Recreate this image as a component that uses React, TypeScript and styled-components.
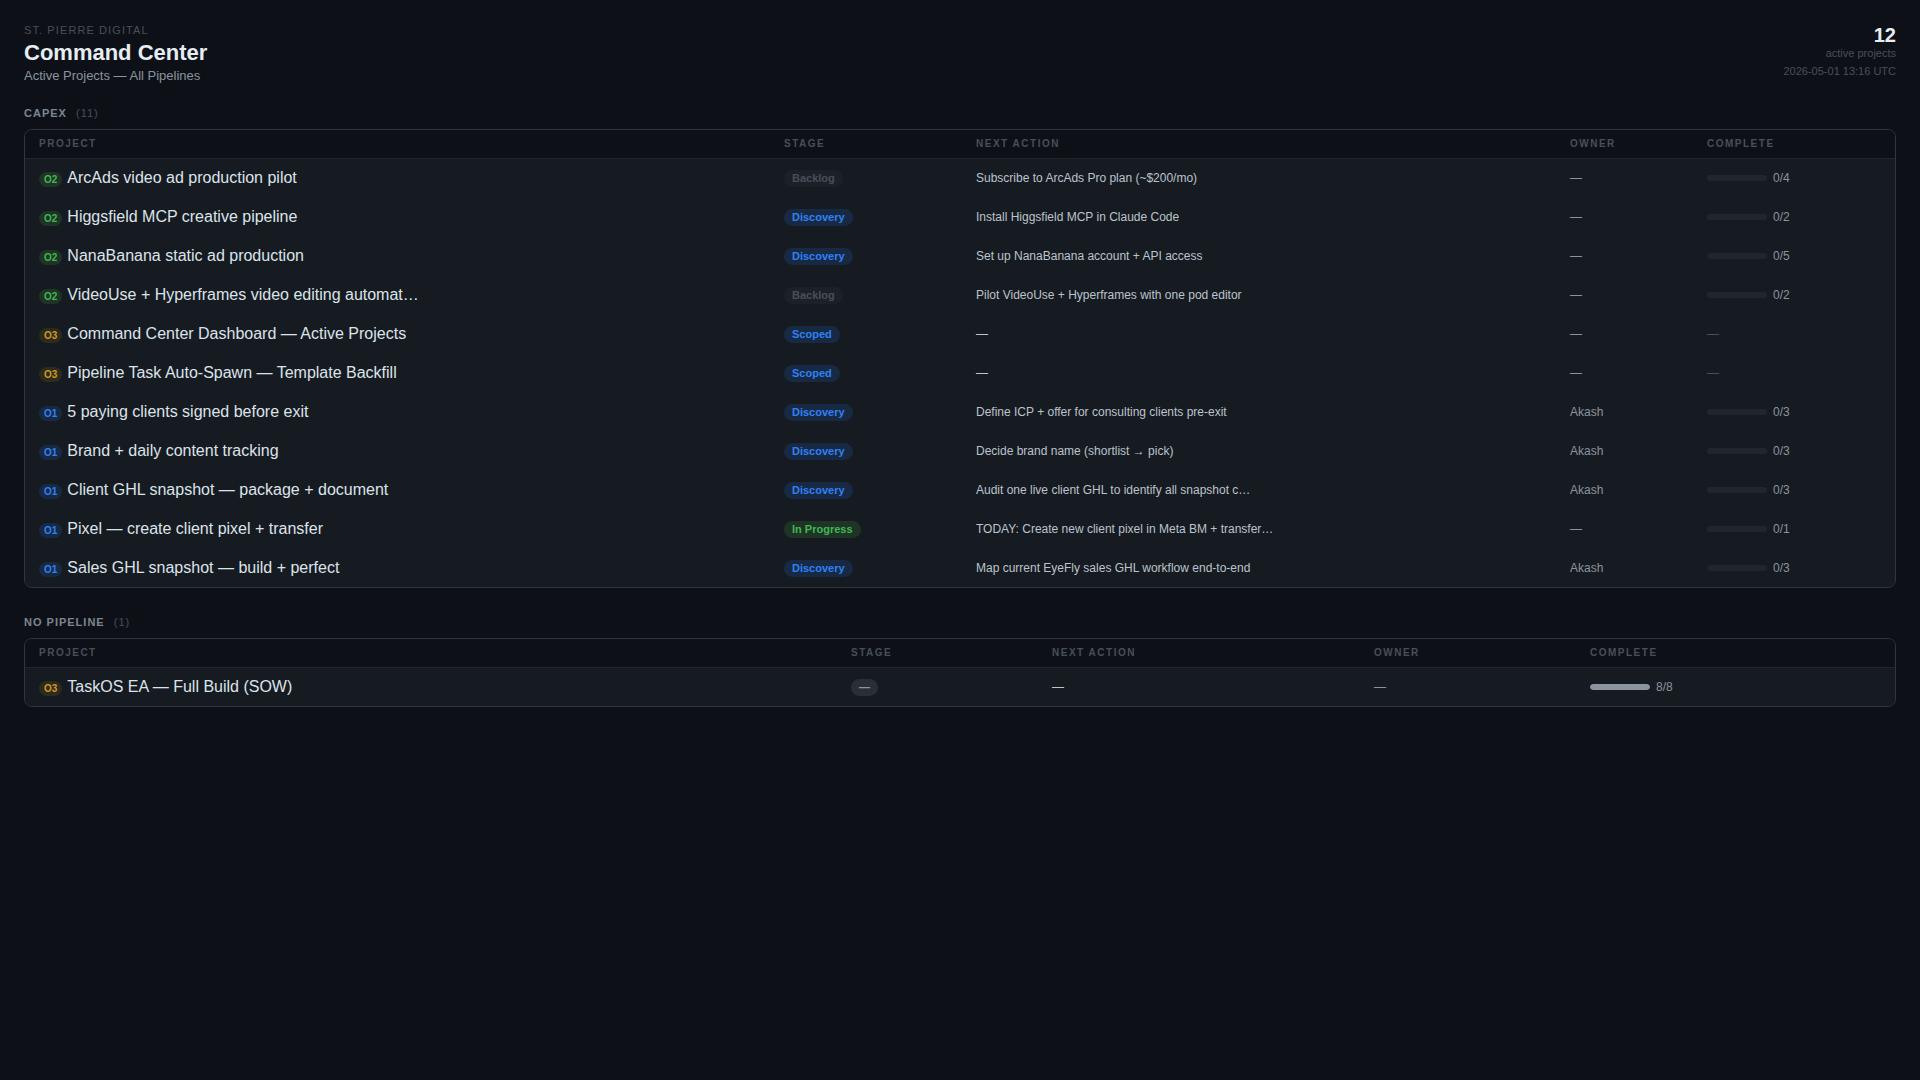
import * as React from 'react';
import styled, { createGlobalStyle } from 'styled-components';

const GlobalStyle = createGlobalStyle`
	html, body {
		margin: 0;
		padding: 0;
		background: #0d1117;
	}
	body {
		font-family: 'Liberation Sans', Arial, sans-serif;
		color: #e6edf3;
	}
`;

const Page = styled.div`
	min-height: 1080px;
	box-sizing: border-box;
	padding: 24px;
	background: #0d1117;
`;
const Header = styled.header`
	display: flex;
	justify-content: space-between;
	align-items: flex-start;
	margin-bottom: 24px;
`;
const Eyebrow = styled.div`
	font-size: 11px;
	line-height: 13px;
	letter-spacing: 0.1em;
	text-transform: uppercase;
	color: #484f58;
	margin-bottom: 4px;
`;
const Title = styled.h1`
	margin: 0;
	font-size: 22px;
	line-height: 24px;
	font-weight: 700;
	color: #e6edf3;
`;
const Subtitle = styled.div`
	margin-top: 3px;
	font-size: 13px;
	line-height: 15px;
	color: #8b949e;
`;
const Summary = styled.div`
	text-align: right;
`;
const SummaryCount = styled.div`
	font-size: 20px;
	line-height: 23px;
	font-weight: 700;
	color: #e6edf3;
`;
const SummaryLabel = styled.div`
	font-size: 11px;
	line-height: 13px;
	color: #484f58;
`;
const Timestamp = styled(SummaryLabel)`
	margin-top: 5px;
`;
const Section = styled.section`
	margin-bottom: 28px;
`;
const SectionLabel = styled.h2`
	margin: 0 0 9px;
	font-size: 11px;
	line-height: 13px;
	font-weight: 700;
	letter-spacing: 1px;
	text-transform: uppercase;
	color: #7d8590;
`;
const SectionCount = styled.span`
	margin-left: 5px;
	font-weight: 400;
	color: #484f58;
`;
const TableWrap = styled.div`
	border: 1px solid #30363d;
	border-radius: 8px;
	overflow: hidden;
`;
const Table = styled.table`
	width: 100%;
	table-layout: fixed;
	border-collapse: collapse;
`;
const HeadCell = styled.th`
	height: 28px;
	box-sizing: border-box;
	padding: 0 14px;
	background: #0d1117;
	border-bottom: 1px solid #21262d;
	text-align: left;
	font-size: 10px;
	font-weight: 700;
	letter-spacing: 0.15em;
	text-transform: uppercase;
	color: #484f58;
`;
const Row = styled.tr`
	background: #161b22;
`;
const Cell = styled.td`
	height: 39px;
	box-sizing: border-box;
	padding: 0 14px;
	white-space: nowrap;
	overflow: hidden;
	font-size: 12px;
`;
const StageCell = styled(Cell)`
	padding-top: 2px;
`;
const ProjectName = styled.span`
	font-size: 16px;
	color: #dde3ea;
`;
const Objective = styled.span<{ $tone: string; $bg: string }>`
	display: inline-block;
	margin-right: 5px;
	padding: 0 5px;
	border-radius: 8px;
	font-size: 10px;
	line-height: 15px;
	font-weight: 700;
	color: ${(p) => p.$tone};
	background: ${(p) => p.$bg};
`;
const Stage = styled.span<{ $tone: string; $bg: string }>`
	display: inline-block;
	padding: 0 8px;
	border-radius: 10px;
	font-size: 11px;
	line-height: 17px;
	font-weight: 700;
	color: ${(p) => p.$tone};
	background: ${(p) => p.$bg};
`;
const NextAction = styled.span`
	color: #bcc3cc;
`;
const Owner = styled.span`
	color: #8b949e;
`;
const Progress = styled.div`
	display: flex;
	align-items: center;
	gap: 6px;
	color: #8b949e;
`;
const Track = styled.div`
	width: 60px;
	height: 6px;
	border-radius: 3px;
	background: #21262d;
	overflow: hidden;
`;
const Fill = styled.div`
	height: 100%;
	border-radius: 3px;
	background: #8b949e;
`;
const NoProgress = styled.span`
	color: #484f58;
`;

const objectives: Record<string, { tone: string; bg: string }> = {
	O1: { tone: '#2f81f7', bg: '#182a43' },
	O2: { tone: '#3fb950', bg: '#1f3326' },
	O3: { tone: '#d29922', bg: '#2d2a1e' },
};
const stages: Record<string, { tone: string; bg: string }> = {
	Backlog: { tone: '#484f58', bg: '#1c2128' },
	Discovery: { tone: '#2f81f7', bg: '#182a43' },
	Scoped: { tone: '#2f81f7', bg: '#182a43' },
	'In Progress': { tone: '#3fb950', bg: '#1f3326' },
	'—': { tone: '#8b949e', bg: '#2a2f37' },
};

interface Project {
	objective: string;
	name: string;
	stage: string;
	next: string;
	owner: string;
	done?: number;
	total?: number;
}

const capex: Project[] = [
	{ objective: 'O2', name: 'ArcAds video ad production pilot', stage: 'Backlog', next: 'Subscribe to ArcAds Pro plan (~$200/mo)', owner: '—', done: 0, total: 4 },
	{ objective: 'O2', name: 'Higgsfield MCP creative pipeline', stage: 'Discovery', next: 'Install Higgsfield MCP in Claude Code', owner: '—', done: 0, total: 2 },
	{ objective: 'O2', name: 'NanaBanana static ad production', stage: 'Discovery', next: 'Set up NanaBanana account + API access', owner: '—', done: 0, total: 5 },
	{ objective: 'O2', name: 'VideoUse + Hyperframes video editing automat…', stage: 'Backlog', next: 'Pilot VideoUse + Hyperframes with one pod editor', owner: '—', done: 0, total: 2 },
	{ objective: 'O3', name: 'Command Center Dashboard — Active Projects', stage: 'Scoped', next: '—', owner: '—' },
	{ objective: 'O3', name: 'Pipeline Task Auto-Spawn — Template Backfill', stage: 'Scoped', next: '—', owner: '—' },
	{ objective: 'O1', name: '5 paying clients signed before exit', stage: 'Discovery', next: 'Define ICP + offer for consulting clients pre-exit', owner: 'Akash', done: 0, total: 3 },
	{ objective: 'O1', name: 'Brand + daily content tracking', stage: 'Discovery', next: 'Decide brand name (shortlist → pick)', owner: 'Akash', done: 0, total: 3 },
	{ objective: 'O1', name: 'Client GHL snapshot — package + document', stage: 'Discovery', next: 'Audit one live client GHL to identify all snapshot c…', owner: 'Akash', done: 0, total: 3 },
	{ objective: 'O1', name: 'Pixel — create client pixel + transfer', stage: 'In Progress', next: 'TODAY: Create new client pixel in Meta BM + transfer…', owner: '—', done: 0, total: 1 },
	{ objective: 'O1', name: 'Sales GHL snapshot — build + perfect', stage: 'Discovery', next: 'Map current EyeFly sales GHL workflow end-to-end', owner: 'Akash', done: 0, total: 3 },
];
const noPipeline: Project[] = [
	{ objective: 'O3', name: 'TaskOS EA — Full Build (SOW)', stage: '—', next: '—', owner: '—', done: 8, total: 8 },
];

const columns = ['Project', 'Stage', 'Next Action', 'Owner', 'Complete'];

const ProjectTable = ({ label, rows, widths }: { label: string; rows: Project[]; widths: number[] }) => (
	<Section>
		<SectionLabel>
			{label} <SectionCount>({rows.length})</SectionCount>
		</SectionLabel>
		<TableWrap>
			<Table>
				<colgroup>
					{widths.map((w, i) => (
						<col key={i} width={w} />
					))}
				</colgroup>
				<thead>
					<tr>
						{columns.map((c) => (
							<HeadCell key={c}>{c}</HeadCell>
						))}
					</tr>
				</thead>
				<tbody>
					{rows.map((r) => (
						<Row key={r.name}>
							<Cell>
								<Objective $tone={objectives[r.objective].tone} $bg={objectives[r.objective].bg}>
									{r.objective}
								</Objective>
								<ProjectName>{r.name}</ProjectName>
							</Cell>
							<StageCell>
								<Stage $tone={stages[r.stage].tone} $bg={stages[r.stage].bg}>
									{r.stage}
								</Stage>
							</StageCell>
							<Cell>
								<NextAction>{r.next}</NextAction>
							</Cell>
							<Cell>
								<Owner>{r.owner}</Owner>
							</Cell>
							<Cell>
								{r.total ? (
									<Progress>
										<Track>
											<Fill style={{ width: `${((r.done ?? 0) / r.total) * 100}%` }} />
										</Track>
										{r.done}/{r.total}
									</Progress>
								) : (
									<NoProgress>—</NoProgress>
								)}
							</Cell>
						</Row>
					))}
				</tbody>
			</Table>
		</TableWrap>
	</Section>
);

const App = () => (
	<>
		<GlobalStyle />
		<Page>
			<Header>
				<div>
					<Eyebrow>St. Pierre Digital</Eyebrow>
					<Title>Command Center</Title>
					<Subtitle>Active Projects — All Pipelines</Subtitle>
				</div>
				<Summary>
					<SummaryCount>12</SummaryCount>
					<SummaryLabel>active projects</SummaryLabel>
					<Timestamp>2026-05-01 13:16 UTC</Timestamp>
				</Summary>
			</Header>
			<ProjectTable label="Capex" rows={capex} widths={[745, 192, 594, 137, 202]} />
			<ProjectTable label="No Pipeline" rows={noPipeline} widths={[812, 201, 322, 216, 319]} />
		</Page>
	</>
);

export default App;
